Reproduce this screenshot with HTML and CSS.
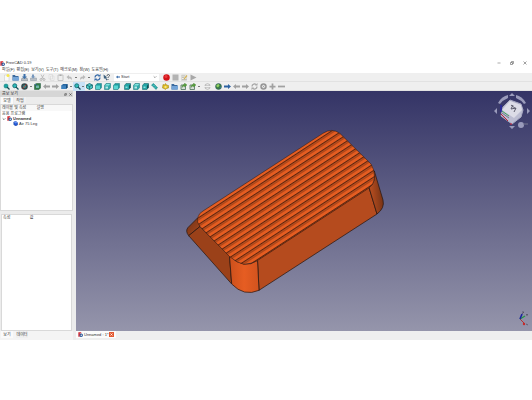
FILE: index.html
```html
<!DOCTYPE html>
<html lang="ko">
<head>
<meta charset="utf-8">
<title>FreeCAD 0.19</title>
<link rel="stylesheet" href="styles.css">
</head>
<body>
<svg class="sprite" aria-hidden="true">
  <defs>
    <symbol id="logo" viewBox="0 0 14 14"><path d="M1 1h8v3H5v2h3v3H5v4H1z" fill="#d3222a"/><circle cx="9" cy="9" r="3.4" fill="none" stroke="#29579a" stroke-width="3"/></symbol>
    <symbol id="new" viewBox="0 0 14 14"><path d="M3 2h9v12H3z" fill="#fafafa" stroke="#c5c5c5"/><circle cx="10" cy="3" r="3" fill="#f8e74e"/></symbol>
    <symbol id="open" viewBox="0 0 14 14"><path d="M1 2h5l1 2h6v9H1z" fill="#3b6a9e"/><path d="M2 6h12v7H1z" fill="#73a4d8"/></symbol>
    <symbol id="save" viewBox="0 0 14 14"><path d="M2 8h10l2 5H0z" fill="#b6bcc2" stroke="#7c858f"/><path d="M5 0h4v5h3L7 10 2 5h3z" fill="#3c70aa"/></symbol>
    <symbol id="print" viewBox="0 0 14 14"><path d="M1 8h12v5H1z" fill="#b9bfc6" stroke="#8f98a1"/><path d="M4 1h4v4h3L6 9 2 5h2z" fill="#7697bd"/></symbol>
    <symbol id="cut" viewBox="0 0 14 14"><path d="M4 1l5 9M10 1L5 10" stroke="#b5b5b5" stroke-width="1.6"/><circle cx="4" cy="11" r="2" fill="none" stroke="#aaa" stroke-width="1.5"/><circle cx="10" cy="11" r="2" fill="none" stroke="#aaa" stroke-width="1.5"/></symbol>
    <symbol id="copy" viewBox="0 0 14 14"><path d="M2 1h7v9H2zM5 4h7v9H5z" fill="#f2f2f2" stroke="#d0d0d0"/></symbol>
    <symbol id="paste" viewBox="0 0 14 14"><path d="M2 2h10v11H2z" fill="#eee" stroke="#bdbdbd" stroke-width="1.6"/><path d="M5 1h4v3H5z" fill="#aaa"/></symbol>
    <symbol id="undo" viewBox="0 0 14 14"><path d="M1 6l5-4v3c5 0 7 3 5 8 0-3-2-4-5-4v2z" fill="#b9b9b9"/></symbol>
    <symbol id="redo" viewBox="0 0 14 14"><path d="M13 6L8 2v3C3 5 1 8 3 13c0-3 2-4 5-4v2z" fill="#b9b9b9"/></symbol>
    <symbol id="refresh" viewBox="0 0 14 14"><path d="M2 7a5 5 0 0 1 8-4M12 7a5 5 0 0 1-8 4" fill="none" stroke="currentColor" stroke-width="2.4"/><path d="M8 5h5V0zM6 9H1v5z" fill="currentColor"/></symbol>
    <symbol id="whats" viewBox="0 0 14 14"><path d="M1 1l1 9 2-2 3 5 2-1-3-5h3z" fill="#3f617f"/><path d="M8 4c0-4 5-4 5-1 0 2-3 2-3 5m0 2v2" fill="none" stroke="#454f59" stroke-width="1.8"/></symbol>
    <symbol id="record" viewBox="0 0 14 14"><circle cx="7" cy="7" r="6.5" fill="#d31219"/><circle cx="6" cy="5" r="3" fill="#e8393c"/></symbol>
    <symbol id="stop" viewBox="0 0 14 14"><path d="M1 1h12v12H1z" fill="#b3b3b3"/></symbol>
    <symbol id="edit" viewBox="0 0 14 14"><path d="M1 2h10v11H1z" fill="#efefec" stroke="#c2c2bb"/><path d="M2 4h6M2 7h4M2 11h9" stroke="#92928b"/><path d="M12 3L6 10" stroke="#d4b45d" stroke-width="2.4"/></symbol>
    <symbol id="play" viewBox="0 0 14 14"><path d="M1 1l12 6L1 13z" fill="#a8a8a8"/></symbol>
    <symbol id="fit" viewBox="0 0 14 14"><path d="M1 1h12v12H1z" fill="#d8eee9"/><circle cx="6" cy="6" r="4" fill="#16a7a3" stroke="#166e72"/><path d="M8 8l5 5" stroke="#164b50" stroke-width="2.6"/></symbol>
    <symbol id="zoom" viewBox="0 0 14 14"><circle cx="5.500" cy="5.500" r="4" fill="#2fb9b8" stroke="#176c73" stroke-width="1.800"/><path d="M8 8l5 5" stroke="#17545c" stroke-width="2.600"/></symbol>
    <symbol id="style" viewBox="0 0 14 14"><circle cx="7" cy="7" r="6.500" fill="#33484c"/><circle cx="7" cy="7" r="3" fill="#329594"/><path d="M3 11l8-8" stroke="#c53b2f" stroke-width="1.800"/></symbol>
    <symbol id="box" viewBox="0 0 14 14"><path d="M1 3l4-2h8v9l-3 3H1z" fill="#307c48" stroke="#20543a"/><path d="M4 5h6v5H4z" fill="#72b7a8"/><path d="M2 2l4 4" stroke="#3e68ad" stroke-width="2"/></symbol>
    <symbol id="left" viewBox="0 0 14 14"><path d="M0 7l6-5v3h8v4H6v3z" fill="currentColor"/></symbol>
    <symbol id="right" viewBox="0 0 14 14"><path d="M14 7L8 2v3H0v4h8v3z" fill="currentColor"/></symbol>
    <symbol id="link" viewBox="0 0 14 14"><path d="M1 5l3-3h9v7l-3 3H1z" fill="#2967a0"/><path d="M1 5h9v7H1z" fill="#3d82bf"/><path d="M10 5l3-3v7l-3 3z" fill="#174875"/></symbol>
    <symbol id="axo" viewBox="0 0 14 14"><path d="M7 1l6 3v6l-6 3-6-3V4z" fill="#4ac7c5" stroke="#17656c" stroke-width="1.500"/><path d="M1 4l6 3 6-3M7 7v6" fill="none" stroke="#17656c" stroke-width="1.500"/></symbol>
    <symbol id="front" viewBox="0 0 14 14"><path d="M1 5l3-4h9v8l-3 4H1z" fill="#1f9da0" stroke="#16767a"/><path d="M2 5h8v7H2z" fill="#59d5d1"/></symbol>
    <symbol id="top" viewBox="0 0 14 14"><path d="M1 5l3-4h9v8l-3 4H1z" fill="#30a9aa" stroke="#16767a"/><path d="M2 5l3-3h7l-2 3z" fill="#83e7e0"/><path d="M3 7h5v4H3z" fill="#b8e9e6"/></symbol>
    <symbol id="rear" viewBox="0 0 14 14"><path d="M1 5l3-4h9v8l-3 4H1z" fill="#23a6a6" stroke="#135b60"/><path d="M10 5l3-3v7l-3 3z" fill="#124f55"/><path d="M3 7h4v3H3z" fill="#8cdfdc"/></symbol>
    <symbol id="measure" viewBox="0 0 14 14"><path d="M1 4l4-3 8 8-3 4z" fill="#25a7a5" stroke="#168183"/><path d="M5 6l2-2M8 9l2-2" stroke="#d3efed"/></symbol>
    <symbol id="part" viewBox="0 0 14 14"><path d="M2 3l3 1 2-3 2 3 4 1v5l-4 1-2 2-3-2-3-1z" fill="#e0bd22" stroke="#957a13"/><path d="M5 6h4v4H5z" fill="#f5e183"/></symbol>
    <symbol id="export" viewBox="0 0 14 14"><path d="M2 4h9v9H2z" fill="#d7ded8" stroke="#4d7259" stroke-width="1.600"/><path d="M4 9c0-5 3-6 5-6V0l5 4-5 4V6C7 6 6 7 4 9z" fill="#58a43c" stroke="#356d29" stroke-width=".600"/></symbol>
    <symbol id="page" viewBox="0 0 14 14"><circle cx="7" cy="7" r="5.500" fill="#f5f5f5" stroke="#a6a6a6" stroke-width="1.500"/><path d="M0 7h14" stroke="#efefef" stroke-width="3"/><path d="M2 5h10M2 9h10" stroke="#a6a6a6"/></symbol>
    <symbol id="globe" viewBox="0 0 14 14"><circle cx="7" cy="7" r="6" fill="#397b43" stroke="#315b6b"/><path d="M3 4l4-2 2 3-3 4-3-2z" fill="#94d363"/><path d="M9 9l3-2-1 4z" fill="#3278ae"/></symbol>
    <symbol id="close" viewBox="0 0 14 14"><circle cx="7" cy="7" r="5" fill="#e3e3e3" stroke="#969696" stroke-width="3"/><path d="M5 5l4 4M9 5L5 9" stroke="#999" stroke-width="1.500"/></symbol>
    <symbol id="plus" viewBox="0 0 14 14"><path d="M7 1v12M1 7h12" stroke="#a1a1a1" stroke-width="3.500"/></symbol>
    <symbol id="minus" viewBox="0 0 14 14"><path d="M0 7h14" stroke="#a1a1a1" stroke-width="3.500"/></symbol>
    <symbol id="solid" viewBox="0 0 14 14"><path d="M2 3l6-2 5 4v6l-6 3-5-4z" fill="#2458d2" stroke="#153687"/><path d="M2 3l6-2 5 4-6 2z" fill="#6592f3"/></symbol>
  </defs>
</svg>

<div class="app">
  <header class="titlebar">
    <svg class="mini"><use href="#logo"/></svg>
    <span class="title">FreeCAD 0.19</span>
    <button class="win" aria-label="최소화"><svg viewBox="0 0 8 8"><path d="M1 4h6" stroke="#555"/></svg></button>
    <button class="win" aria-label="이전 크기로"><svg viewBox="0 0 8 8"><path d="M1 3h4v4H1zM3 3V1h4v4H5" fill="none" stroke="#444"/></svg></button>
    <button class="win" aria-label="닫기"><svg viewBox="0 0 8 8"><path d="M1 1l6 6M7 1L1 7" stroke="#444"/></svg></button>
  </header>
  <nav class="menu">
    <button>파일(F)</button><button>편집(E)</button><button>보기(V)</button><button>도구(T)</button><button>매크로(M)</button><button>창(W)</button><button>도움말(H)</button>
  </nav>

  <div class="toolbar file-bar">
    <div class="group">
      <button aria-label="새 문서"><svg><use href="#new"/></svg></button>
      <button aria-label="열기"><svg><use href="#open"/></svg></button>
      <button aria-label="저장"><svg><use href="#save"/></svg></button>
      <button aria-label="인쇄"><svg><use href="#print"/></svg></button>
      <button aria-label="잘라내기"><svg><use href="#cut"/></svg></button>
      <button aria-label="복사"><svg><use href="#copy"/></svg></button>
      <button aria-label="붙여넣기"><svg><use href="#paste"/></svg></button>
      <button aria-label="실행 취소"><svg><use href="#undo"/></svg></button><i class="drop"></i>
      <button aria-label="다시 실행"><svg><use href="#redo"/></svg></button><i class="drop"></i>
    </div>
    <div class="group">
      <button class="blue" aria-label="새로 고침"><svg><use href="#refresh"/></svg></button>
      <button aria-label="이것은 무엇입니까"><svg><use href="#whats"/></svg></button>
    </div>
    <div class="workbench">
      <svg class="blue"><use href="#left"/></svg>
      <select aria-label="워크벤치"><option>Start</option></select>
      <svg class="chevron" viewBox="0 0 6 6"><path d="M1 2l2 2 2-2" fill="none" stroke="#777"/></svg>
    </div>
    <div class="group">
      <button aria-label="매크로 기록"><svg><use href="#record"/></svg></button>
      <button aria-label="기록 중지"><svg><use href="#stop"/></svg></button>
      <button aria-label="매크로 편집"><svg><use href="#edit"/></svg></button>
      <button aria-label="매크로 실행"><svg><use href="#play"/></svg></button>
    </div>
  </div>

  <div class="toolbar view-bar">
    <div class="group">
      <button aria-label="전체 보기"><svg><use href="#fit"/></svg></button>
      <button aria-label="선택 보기"><svg><use href="#zoom"/></svg></button>
      <button aria-label="그리기 스타일"><svg><use href="#style"/></svg></button><i class="drop"></i>
      <button aria-label="경계 상자"><svg><use href="#box"/></svg></button>
      <button class="grey" aria-label="뒤로"><svg><use href="#left"/></svg></button>
      <button class="grey" aria-label="앞으로"><svg><use href="#right"/></svg></button>
      <button aria-label="링크"><svg><use href="#link"/></svg></button><i class="drop"></i>
      <button class="active" aria-label="확대"><svg><use href="#zoom"/></svg><i class="drop"></i></button>
      <button aria-label="등각투영"><svg><use href="#axo"/></svg></button>
      <button aria-label="정면"><svg><use href="#front"/></svg></button>
      <button aria-label="평면"><svg><use href="#top"/></svg></button>
      <button aria-label="우측면"><svg><use href="#front"/></svg></button>
    </div>
    <div class="group">
      <button aria-label="후면"><svg><use href="#rear"/></svg></button>
      <button aria-label="저면"><svg><use href="#top"/></svg></button>
      <button aria-label="좌측면"><svg><use href="#rear"/></svg></button>
      <button aria-label="거리 측정"><svg><use href="#measure"/></svg></button>
    </div>
    <div class="group">
      <button aria-label="부품"><svg><use href="#part"/></svg></button>
      <button aria-label="그룹"><svg><use href="#open"/></svg></button>
      <button aria-label="링크 만들기"><svg><use href="#export"/></svg></button>
      <button aria-label="링크 작업"><svg><use href="#export"/></svg></button><i class="drop"></i>
    </div>
    <div class="group">
      <button aria-label="웹 페이지"><svg><use href="#page"/></svg></button>
    </div>
    <div class="group">
      <button aria-label="웹사이트 열기"><svg><use href="#globe"/></svg></button>
      <button class="blue" aria-label="시작 페이지"><svg><use href="#right"/></svg></button>
      <button class="grey" aria-label="이전 페이지"><svg><use href="#left"/></svg></button>
      <button class="grey" aria-label="다음 페이지"><svg><use href="#right"/></svg></button>
      <button class="grey" aria-label="페이지 새로 고침"><svg><use href="#refresh"/></svg></button>
      <button aria-label="페이지 중지"><svg><use href="#close"/></svg></button>
      <button aria-label="페이지 확대"><svg><use href="#plus"/></svg></button>
      <button aria-label="페이지 축소"><svg><use href="#minus"/></svg></button>
    </div>
  </div>

  <div class="workspace">
    <aside class="combo">
      <div class="dock-title"><span>콤보 보기</span>
        <button class="dock-btn" aria-label="분리"><svg viewBox="0 0 8 8"><path d="M1 3h4v4H1zM3 3V1h4v4H5" fill="none" stroke="#333"/></svg></button>
        <button class="dock-btn" aria-label="패널 닫기"><svg viewBox="0 0 8 8"><path d="M1 1l6 6M7 1L1 7" stroke="#333" stroke-width="1.500"/></svg></button>
      </div>
      <div class="tabs"><button class="tab on">모델</button><button class="tab">작업</button></div>
      <section class="tree">
        <div class="cols head"><span>레이블 및 속성</span><span>설명</span></div>
        <div class="row">응용 프로그램</div>
        <div class="row doc"><svg class="twist" viewBox="0 0 6 6"><path d="M1 2l2 2 2-2" fill="none" stroke="#444"/></svg><svg class="mini"><use href="#logo"/></svg><b>Unnamed</b></div>
        <div class="row leaf"><svg class="mini"><use href="#solid"/></svg><span>Air 75 Leg</span></div>
      </section>
      <section class="props"><div class="cols"><span>속성</span><span>값</span></div></section>
      <div class="tabs foot"><button class="tab on">보기</button><button class="tab">데이터</button></div>
    </aside>

    <main class="mdi">
      <div class="viewport">
        <svg class="model" viewBox="76 91 456 240" role="img" aria-label="Air 75 Leg">
          <defs>
            <linearGradient id="frontCorner"><stop offset="0" stop-color="#cc501c"/><stop offset=".5" stop-color="#e65d22"/><stop offset="1" stop-color="#d2531e"/></linearGradient>
            <linearGradient id="rightCorner" x1="0" y1=".6" x2="1" y2=".4"><stop offset=".2" stop-color="#b14b1f"/><stop offset="1" stop-color="#713013"/></linearGradient>
            <linearGradient id="leftCorner" x1="0" y1="0" x2="1" y2="1"><stop offset="0" stop-color="#6f3115"/><stop offset="1" stop-color="#a9481d"/></linearGradient>
            <pattern id="ribs" width="40" height="5.600" patternUnits="userSpaceOnUse" patternTransform="translate(203 212) rotate(-33.100)">
              <path d="M0 2.500h40" stroke="#2c1209" stroke-width="1"/><path d="M0 4.300h40" stroke="#6b2c0f" stroke-width=".500"/>
            </pattern>
            <path id="topFace" d="M197.500 218Q199 213 203 211L323 133.300Q332 127.500 340 133.500L371 164Q375 170 374.500 178Q373.500 185 369 188L257.500 260.500Q252 264 244 264.300Q237 263 229.500 256.500L200 226.500Q196.500 222 197.500 218z"/>
          </defs>
          <g stroke="#24140e" stroke-width=".7" stroke-linejoin="round">
            <path d="M197.500 218L188 227.500Q185 231 188.700 235.700L200 226.500z" fill="url(#leftCorner)"/>
            <path d="M200 226.500L188.700 235.700L231.700 284L229.500 256z" fill="#9b4119"/>
            <path d="M257.500 260L369 187.500L377 214L259 290.300z" fill="#b54b1e"/>
            <path d="M369 187.500Q376 183 374.300 171L383 200Q385 208 377 214z" fill="url(#rightCorner)"/>
            <path d="M229.500 256Q244 270 257.500 260.300L259 290.300Q244 297 231.700 284z" fill="url(#frontCorner)"/>
            <use href="#topFace" fill="#e65d21" stroke-width=".5"/>
            <use href="#topFace" fill="url(#ribs)" stroke="none"/>
          </g>
        </svg>
        <svg class="navcube" viewBox="0 0 38 38" aria-hidden="true">
          <g fill="#9a9bbb">
            <path d="M19 1l3 3h-6zM19 37l3-3h-6zM1 19l3-3v6zM37 19l-3-3v6z"/>
            <path d="M5 11Q9 4 15 3v3Q10 8 7 12zM33 11Q29 4 23 3v3Q28 8 31 12z"/>
            <circle cx="28" cy="33" r="3"/>
          </g>
          <path d="M17 8l11 4 2 6-2 7-9 7-11-8 2-9z" fill="#bcbdd2" stroke="#a8a9c2" stroke-linejoin="round"/>
          <path d="M17 9l11 4 1 5-8 8-12-8z" fill="#dcdce7"/>
          <path d="M18 13l5 4M20 13l-2 4 5-1-2 4" fill="none" stroke="#5c5c6c" stroke-width="1"/>
          <path d="M8 13v7" stroke="#1b1bc0"/><path d="M9 19l7 5" stroke="#45a45e"/><path d="M8 22l7 7" stroke="#bf2037"/>
          <path d="M17 32h2" stroke="#d01c32"/><path d="M9 21l7 5M30 32h5" stroke="#777891"/>
        </svg>
        <svg class="axes" viewBox="0 0 12 16" aria-hidden="true">
          <path d="M2 8l5 5" stroke="#b33434" stroke-width="1"/><circle cx="6" cy="13" r="1.200" fill="#c52929"/>
          <path d="M2 8l5-3" stroke="#239744" stroke-width="1.400"/><path d="M2 8l2-5" stroke="#1b259c" stroke-width="1.600"/>
          <path d="M4 1h2L4 3M8 3l1 1 1-1M9 4v1M8 13l2 1" fill="none" stroke="#4b4b5b" stroke-width=".700"/>
        </svg>
      </div>
      <div class="doc-tabs"><button class="doc-tab"><svg class="mini"><use href="#logo"/></svg><span>Unnamed : 1*</span><svg class="mini" viewBox="0 0 10 10"><path d="M0 0h10v10H0z" fill="#e35931"/><path d="M3 3l4 4M7 3L3 7" stroke="#fff" stroke-width="1.500"/></svg></button></div>
    </main>
  </div>
</div>
</body>
</html>
```
FILE: styles.css
```css
* { box-sizing: border-box; }

body {
  margin: 0;
  padding: 60px 0;
  height: 100vh;
  background: #fff;
  color: #333;
  font: 4px/6px "Liberation Sans", "Noto Sans CJK KR", sans-serif;
}

.sprite { position: absolute; width: 0; height: 0; }

button, select {
  margin: 0;
  padding: 0;
  border: 0;
  background: none;
  color: inherit;
  font: inherit;
}

button svg { display: block; width: 100%; height: 100%; }

.app { display: flex; flex-direction: column; height: 100%; background: #efefef; }

.mini { flex: none; width: 5px; height: 5px; }

.titlebar { display: flex; align-items: center; height: 6px; background: #fff; }
.title { flex: 1; margin-left: 1px; white-space: nowrap; }
.win { width: 4px; height: 4px; margin-right: 9px; }
.win:last-child { margin-right: 5px; }

.menu { display: flex; gap: 2px; height: 7px; padding-left: 2px; background: #fff; }
.menu button { line-height: 7px; white-space: nowrap; }

.toolbar {
  display: flex;
  align-items: center;
  gap: 4px;
  height: 9px;
  padding-left: 3px;
  border-bottom: 1px solid #e2e2e2;
}
.group { display: flex; align-items: center; gap: 2px; }
.group button { width: 7px; height: 7px; }
.drop {
  width: 2px;
  height: 1px;
  background: #777;
}
.blue { color: #2c62a3; }
.grey { color: #a1a1a1; }
.group .active {
  display: flex;
  align-items: center;
  gap: 1px;
  width: 12px;
  height: 9px;
  margin: 0 -1px;
  padding: 0 1px;
  background: #c8e2f7;
}
.active svg { width: 7px; height: 7px; }

.workbench {
  display: flex;
  align-items: center;
  width: 45px;
  height: 7px;
  padding: 0 2px;
  background: #fff;
}
.workbench svg { width: 4px; height: 4px; }
.workbench select { flex: 1; min-width: 0; margin-left: 1px; appearance: none; }

.workspace { display: flex; flex: 1; min-height: 0; }

.combo { display: flex; flex-direction: column; width: 76px; padding-right: 3px; background: #ececec; }
.dock-title { display: flex; align-items: center; gap: 2px; height: 6px; padding: 0 1px 0 2px; background: #d6d6d6; }
.dock-title span { flex: 1; }
.dock-btn { width: 3px; height: 3px; }
.tabs { display: flex; gap: 1px; height: 7px; padding-left: 1px; }
.tab { width: 12px; height: 7px; background: #f0f0f0; }
.tab.on { background: #fafafa; }
.tree, .props { background: #fff; border: 1px solid #d9d9d9; }
.tree { flex: 11; margin-bottom: 3px; }
.props { flex: 12; margin: 0 1px; }
.cols { display: grid; grid-template-columns: 1fr 1fr; padding: 0 1px; white-space: nowrap; }
.cols.head { background: #f8f8f8; }
.props .cols { grid-template-columns: 2fr 3fr; }
.row { display: flex; align-items: center; gap: 1px; height: 5px; padding-left: 1px; white-space: nowrap; }
.twist { width: 4px; height: 4px; }
.leaf { padding-left: 12px; }
.foot { gap: 3px; height: 9px; background: #f4f4f4; }

.mdi { display: flex; flex: 1; flex-direction: column; min-width: 0; }
.viewport {
  position: relative;
  flex: 1;
  min-height: 0;
  background: linear-gradient(#343466, #9595ab);
}
.model { display: block; width: 100%; height: 100%; }
.navcube { position: absolute; top: 1px; right: 1px; width: 38px; height: 38px; }
.axes { position: absolute; right: 2px; bottom: 4px; width: 12px; height: 16px; }

.doc-tabs { display: flex; height: 9px; }
.doc-tab {
  display: flex;
  align-items: center;
  gap: 1px;
  height: 7px;
  padding: 0 2px;
  background: #fbfbfb;
  white-space: nowrap;
}
.doc-tab svg { width: 5px; height: 5px; }
```
